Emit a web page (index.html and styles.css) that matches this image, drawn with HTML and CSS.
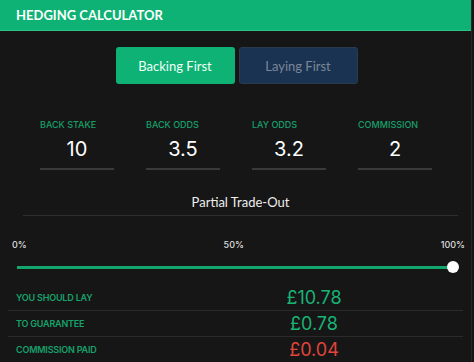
FILE: index.html
```html
<!DOCTYPE html>
<html lang="en">
<head>
    <meta charset="UTF-8">
    <title>Hedging Calculator</title>
    <link rel="stylesheet" href="styles.css">
</head>
<body>
<div class="calculator">
    <div class="calculator__header">HEDGING CALCULATOR</div>
    <div class="mode-buttons">
        <button class="mode mode--active">Backing First</button>
        <button class="mode mode--off">Laying First</button>
    </div>
    <div class="fields">
        <div class="field">
            <label>BACK STAKE</label>
            <div class="field__value">10</div>
        </div>
        <div class="field">
            <label>BACK ODDS</label>
            <div class="field__value">3.5</div>
        </div>
        <div class="field">
            <label>LAY ODDS</label>
            <div class="field__value">3.2</div>
        </div>
        <div class="field">
            <label>COMMISSION</label>
            <div class="field__value">2</div>
        </div>
    </div>
    <div class="partial">Partial Trade-Out</div>
    <div class="slider">
        <div class="slider__labels">
            <span>0%</span>
            <span>50%</span>
            <span>100%</span>
        </div>
        <div class="slider__track">
            <div class="slider__thumb"></div>
        </div>
    </div>
    <div class="results">
        <div class="result">
            <span class="result__label">YOU SHOULD LAY</span>
            <span class="result__value">£10.78</span>
        </div>
        <div class="result">
            <span class="result__label">TO GUARANTEE</span>
            <span class="result__value">£0.78</span>
        </div>
        <div class="result">
            <span class="result__label">COMMISSION PAID</span>
            <span class="result__value red">£0.04</span>
        </div>
    </div>
</div>
</body>
</html>
```

FILE: styles.css
```css
body{
    margin: 0;
    background: #151515;
    font-family: Inter, "Open Sans", sans-serif;
    color: #fff;
    overflow: hidden;
}
.calculator{
    width: 471px;
    height: 362px;
    background: #161616;
    border-right: 1px solid #262626;
}
.calculator__header{
    height: 30px;
    background: #0db274;
    border-bottom: 1px solid #2bc486;
    font-family: Lato, sans-serif;
    font-weight: bold;
    font-size: 13px;
    line-height: 31px;
    padding-left: 16px;
}
.mode-buttons{
    display: flex;
    justify-content: center;
    gap: 4px;
    margin-top: 16px;
    padding-left: 2px;
}
.mode{
    width: 119px;
    height: 37px;
    border-radius: 3px;
    font-family: Lato, sans-serif;
    font-size: 13px;
    border: 1px solid transparent;
}
.mode--active{
    background: #0db274;
    color: #f2fff8;
}
.mode--off{
    background: #1a3352;
    border-color: #2b3b4e;
    color: #7b8796;
}
.fields{
    display: grid;
    grid-template-columns: repeat(4, 106px);
    margin: 35px 0 0 24px;
}
.field{
    width: 74px;
    margin: 0 auto;
}
.field label{
    display: block;
    font-size: 9px;
    font-weight: 500;
    color: #17a06b;
    line-height: 12px;
    white-space: nowrap;
}
.field__value{
    text-align: center;
    font-size: 20px;
    line-height: 24px;
    margin-top: 6px;
    padding-bottom: 7px;
    border-bottom: 2px solid #3a3a3a;
}
.partial{
    margin: 24px 0 0 23px;
    width: 435px;
    text-align: center;
    font-family: Lato, sans-serif;
    font-size: 13px;
    color: #eee;
    padding-bottom: 5px;
    border-bottom: 1px solid #2e2e2e;
}
.slider{
    padding: 0 6px 0 12px;
    margin-top: 23px;
}
.slider__labels{
    display: flex;
    justify-content: space-between;
    font-size: 9px;
    font-weight: 500;
    color: #ddd;
}
.slider__track{
    position: relative;
    height: 3px;
    background: #12a56c;
    margin: 16px 12px 0 5px;
}
.slider__thumb{
    position: absolute;
    right: -6px;
    top: -5px;
    width: 12px;
    height: 12px;
    border-radius: 50%;
    background: #fff;
}
.results{
    margin: 16px 8px 0 8px;
}
.result{
    display: flex;
    align-items: center;
    height: 25px;
    border-bottom: 1px solid #2a2a2a;
}
.result:last-child{
    border-bottom: none;
}
.result__label{
    width: 243px;
    padding-left: 8px;
    font-size: 9px;
    font-weight: 600;
    letter-spacing: -0.2px;
    color: #16a26b;
}
.result__value{
    width: 110px;
    text-align: center;
    font-size: 18px;
    color: #19b375;
}
.result__value.red{
    color: #e0453b;
}
```
